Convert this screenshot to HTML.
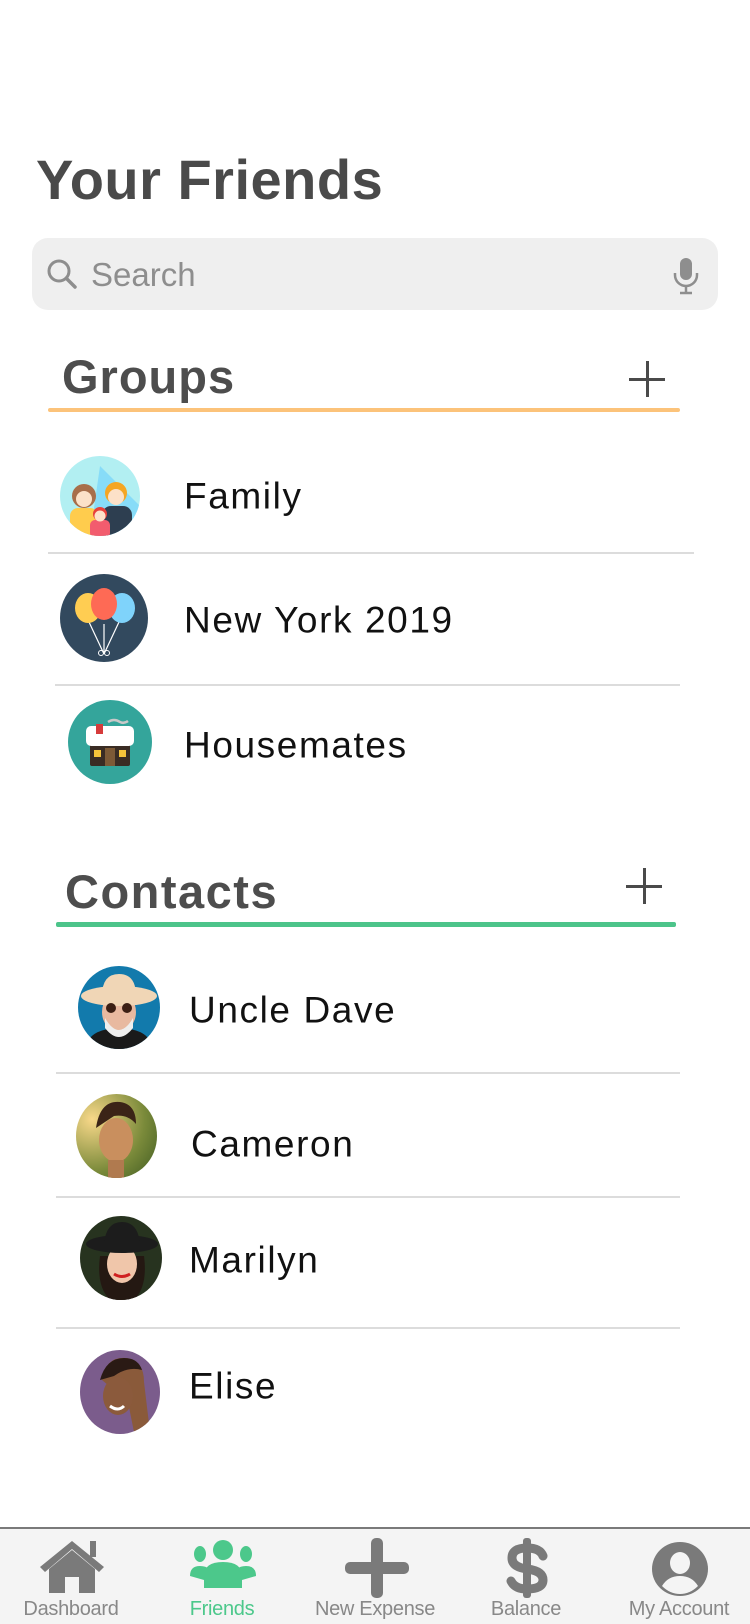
<!DOCTYPE html>
<html><head><meta charset="utf-8"><style>
*{margin:0;padding:0;box-sizing:border-box}
body{width:750px;height:1624px;background:#fff;position:relative;overflow:hidden;font-family:"Liberation Sans",sans-serif}
.a{position:absolute}
.t{position:absolute;font-size:37px;color:#111;line-height:1;transform:translateY(-50%);letter-spacing:1.6px}
.hd{position:absolute;font-weight:bold;color:#4d4d4d;line-height:1;letter-spacing:1px}
.dv{position:absolute;height:1.5px;background:#dcdcdc}
.c{position:absolute;border-radius:50%;overflow:hidden}
.pl{position:absolute;width:36px;height:36px}
.pl:before,.pl:after{content:"";position:absolute;background:#4a4a4a}
.pl:before{left:17px;top:0;width:3px;height:36px}
.pl:after{top:17px;left:0;height:3px;width:36px}
.nl{position:absolute;top:1598px;font-size:20px;color:#888;width:150px;text-align:center;letter-spacing:-0.3px}
</style></head><body>
<div class="hd" style="left:36px;top:152px;font-size:56px;color:#4a4a4a;letter-spacing:0.5px">Your Friends</div>
<div class="a" style="left:32px;top:238px;width:686px;height:72px;background:#efefef;border-radius:16px"></div>
<svg class="a" style="left:46px;top:258px" width="32" height="32" viewBox="0 0 32 32"><circle cx="13" cy="13" r="10" fill="none" stroke="#8e8e8e" stroke-width="3"/><line x1="20.5" y1="20.5" x2="29" y2="29" stroke="#8e8e8e" stroke-width="3.5" stroke-linecap="round"/></svg>
<div class="a" style="left:91px;top:256px;font-size:33px;color:#8e8e8e">Search</div>
<svg class="a" style="left:671px;top:256px" width="30" height="40" viewBox="0 0 30 40"><rect x="9" y="2" width="12" height="22" rx="6" fill="#8e8e8e"/><path d="M4 17v2a11 11 0 0 0 22 0v-2" fill="none" stroke="#8e8e8e" stroke-width="2.5"/><line x1="15" y1="30" x2="15" y2="37" stroke="#8e8e8e" stroke-width="2.5"/><line x1="9" y1="37" x2="21" y2="37" stroke="#8e8e8e" stroke-width="2.5"/></svg>

<div class="hd" style="left:62px;top:353px;font-size:47px">Groups</div>
<div class="pl" style="left:629px;top:361px"></div>
<div class="a" style="left:48px;top:408px;width:632px;height:4px;background:#fcc37a;border-radius:2px"></div>

<div class="c" style="left:60px;top:456px;width:80px;height:80px;background:#b2eff2">
<svg width="80" height="80" viewBox="0 0 80 80"><path d="M40 10 L80 50 L80 80 L30 80Z" fill="#87dcf8"/><circle cx="24" cy="40" r="12" fill="#a86e4a"/><rect x="10" y="52" width="28" height="30" rx="8" fill="#ffcc4d"/><circle cx="24" cy="43" r="8" fill="#fce1c8"/><circle cx="56" cy="37" r="11" fill="#f5a623"/><rect x="42" y="50" width="30" height="32" rx="9" fill="#2d3e50"/><circle cx="56" cy="41" r="8" fill="#fce1c8"/><circle cx="40" cy="58" r="7" fill="#e8413a"/><rect x="30" y="64" width="20" height="18" rx="5" fill="#f25c6e"/><circle cx="40" cy="60" r="5.5" fill="#fce1c8"/></svg></div>
<div class="t" style="left:184px;top:496px">Family</div>
<div class="dv" style="left:48px;top:552px;width:646px"></div>

<div class="c" style="left:60px;top:574px;width:88px;height:88px;background:#32495e">
<svg width="88" height="88" viewBox="0 0 88 88"><path d="M29 48 L44 80 M44 50 L44 80 M59 48 L44 80" stroke="#fff" stroke-width="1.2" fill="none"/><ellipse cx="28" cy="34" rx="13" ry="15" fill="#ffcd52"/><ellipse cx="62" cy="34" rx="13" ry="15" fill="#7fd3fb"/><ellipse cx="44" cy="30" rx="13" ry="16" fill="#fe6a55"/><circle cx="41" cy="79" r="2.5" fill="none" stroke="#fff"/><circle cx="47" cy="79" r="2.5" fill="none" stroke="#fff"/></svg></div>
<div class="t" style="left:184px;top:620px">New York 2019</div>
<div class="dv" style="left:55px;top:684px;width:625px"></div>

<div class="c" style="left:68px;top:700px;width:84px;height:84px;background:#34a59b">
<svg width="84" height="84" viewBox="0 0 84 84"><path d="M40 22 q6 -4 12 0 q4 2 8 -1" stroke="#c9c9c9" stroke-width="2.5" fill="none"/><rect x="22" y="36" width="40" height="22" fill="#3a2c24"/><rect x="18" y="26" width="48" height="20" rx="5" fill="#fff"/><rect x="28" y="24" width="7" height="10" fill="#d63b3b"/><rect x="22" y="46" width="40" height="20" rx="2" fill="#3a2c24"/><rect x="26" y="50" width="7" height="7" fill="#f6c33a"/><rect x="51" y="50" width="7" height="7" fill="#f6c33a"/><rect x="37" y="48" width="10" height="18" fill="#7d5a37"/></svg></div>
<div class="t" style="left:184px;top:745px">Housemates</div>

<div class="hd" style="left:65px;top:868px;font-size:47px;letter-spacing:1.5px">Contacts</div>
<div class="pl" style="left:626px;top:868px"></div>
<div class="a" style="left:56px;top:922px;width:620px;height:5px;background:#4cc48a;border-radius:2px"></div>

<div class="c" style="left:78px;top:966px;width:82px;height:83px;background:#127aac">
<svg width="82" height="83" viewBox="0 0 82 83"><ellipse cx="41" cy="76" rx="30" ry="14" fill="#1a1a1a"/><ellipse cx="41" cy="46" rx="17" ry="20" fill="#e8b9a0"/><path d="M27 52 q14 24 28 0 l0 10 q-14 18 -28 0z" fill="#eee"/><ellipse cx="41" cy="30" rx="38" ry="10" fill="#f0d6b6"/><path d="M24 30 q0 -22 17 -22 q17 0 17 22z" fill="#f0d6b6"/><circle cx="33" cy="42" r="5" fill="#3b1f14"/><circle cx="49" cy="42" r="5" fill="#3b1f14"/></svg></div>
<div class="t" style="left:189px;top:1010px">Uncle Dave</div>
<div class="dv" style="left:56px;top:1072px;width:624px"></div>

<div class="c" style="left:76px;top:1094px;width:81px;height:84px;background:radial-gradient(circle at 20% 30%,#f8d889,#7a8a3a 60%,#3e5a22)">
<svg width="81" height="84" viewBox="0 0 81 84"><ellipse cx="40" cy="46" rx="17" ry="22" fill="#c98f5e"/><path d="M20 34 q4 -28 24 -26 q16 2 16 22 q-8 -10 -22 -8 z" fill="#3b2417"/><rect x="32" y="66" width="16" height="18" fill="#b07a4f"/></svg></div>
<div class="t" style="left:191px;top:1144px">Cameron</div>
<div class="dv" style="left:56px;top:1196px;width:624px"></div>

<div class="c" style="left:80px;top:1216px;width:82px;height:84px;background:#27331f">
<svg width="82" height="84" viewBox="0 0 82 84"><path d="M20 40 q-4 30 10 44 h24 q14 -14 10 -44z" fill="#241812"/><ellipse cx="42" cy="48" rx="15" ry="19" fill="#f0c6aa"/><path d="M34 58 q8 5 16 0" stroke="#d02020" stroke-width="3" fill="none"/><ellipse cx="42" cy="28" rx="36" ry="9" fill="#1c1c1c"/><path d="M24 28 q2 -22 18 -22 q16 0 18 22z" fill="#1c1c1c"/></svg></div>
<div class="t" style="left:189px;top:1260px">Marilyn</div>
<div class="dv" style="left:56px;top:1327px;width:624px"></div>

<div class="c" style="left:80px;top:1350px;width:80px;height:84px;background:#7b5c8c">
<svg width="80" height="84" viewBox="0 0 80 84"><path d="M22 30 q4 -24 24 -22 q18 2 18 24 l6 50 h-16 l-6 -30z" fill="#8a5a3a"/><ellipse cx="38" cy="46" rx="15" ry="19" fill="#8b5a3c"/><path d="M30 56 q8 6 14 0" stroke="#fff" stroke-width="3" fill="none"/><path d="M20 30 q6 -22 24 -22 q14 0 18 12 q-14 -4 -28 6z" fill="#2a1a14"/></svg></div>
<div class="t" style="left:189px;top:1386px">Elise</div>

<div class="a" style="left:0;top:1527px;width:750px;height:97px;background:#f4f4f4;border-top:2px solid #7a7a7a"></div>
<svg class="a" style="left:38px;top:1539px" width="68" height="54" viewBox="0 0 68 54"><path d="M2 28 L34 2 L66 28 L61 33 L34 10 L7 33Z" fill="#7a7a7a"/><rect x="52" y="2" width="6" height="16" fill="#7a7a7a"/><path d="M11 30 L34 11 L57 30 V54 H41 V38 H27 V54 H11Z" fill="#7a7a7a"/></svg>
<svg class="a" style="left:190px;top:1540px" width="66" height="48" viewBox="0 0 66 48"><circle cx="33" cy="10" r="10" fill="#4cc88b"/><ellipse cx="10" cy="14" rx="6" ry="8" fill="#4cc88b"/><ellipse cx="56" cy="14" rx="6" ry="8" fill="#4cc88b"/><path d="M14 48 V36 q0 -14 19 -14 q19 0 19 14 V48Z" fill="#4cc88b"/><path d="M0 36 q0 -10 10 -10 q6 0 9 3 q-5 4 -5 11z" fill="#4cc88b"/><path d="M66 36 q0 -10 -10 -10 q-6 0 -9 3 q5 4 5 11z" fill="#4cc88b"/></svg>
<svg class="a" style="left:343px;top:1538px" width="66" height="60" viewBox="0 0 66 60"><rect x="28" y="0" width="12" height="60" rx="5" fill="#7a7a7a"/><rect x="2" y="24" width="64" height="12" rx="5" fill="#7a7a7a"/></svg>
<svg class="a" style="left:503px;top:1538px" width="48" height="60" viewBox="0 0 48 60"><rect x="20" y="0" width="8" height="60" rx="3" fill="#7a7a7a"/><path d="M40 18 q-3 -8 -16 -8 q-15 0 -15 10 q0 9 15 11 q16 2 16 11 q0 9 -16 9 q-12 0 -16 -8" fill="none" stroke="#7a7a7a" stroke-width="9" stroke-linecap="round"/></svg>
<svg class="a" style="left:652px;top:1542px" width="56" height="54" viewBox="0 0 56 54"><ellipse cx="28" cy="27" rx="28" ry="27" fill="#7a7a7a"/><ellipse cx="28" cy="21" rx="10" ry="11" fill="#f4f4f4"/><path d="M10 44 q6 -10 18 -10 q12 0 18 10 q-8 8 -18 8 q-10 0 -18 -8z" fill="#f4f4f4"/></svg>
<div class="nl" style="left:-4px">Dashboard</div>
<div class="nl" style="left:147px;color:#4cc88b">Friends</div>
<div class="nl" style="left:300px">New Expense</div>
<div class="nl" style="left:451px">Balance</div>
<div class="nl" style="left:604px">My Account</div>
</body></html>
